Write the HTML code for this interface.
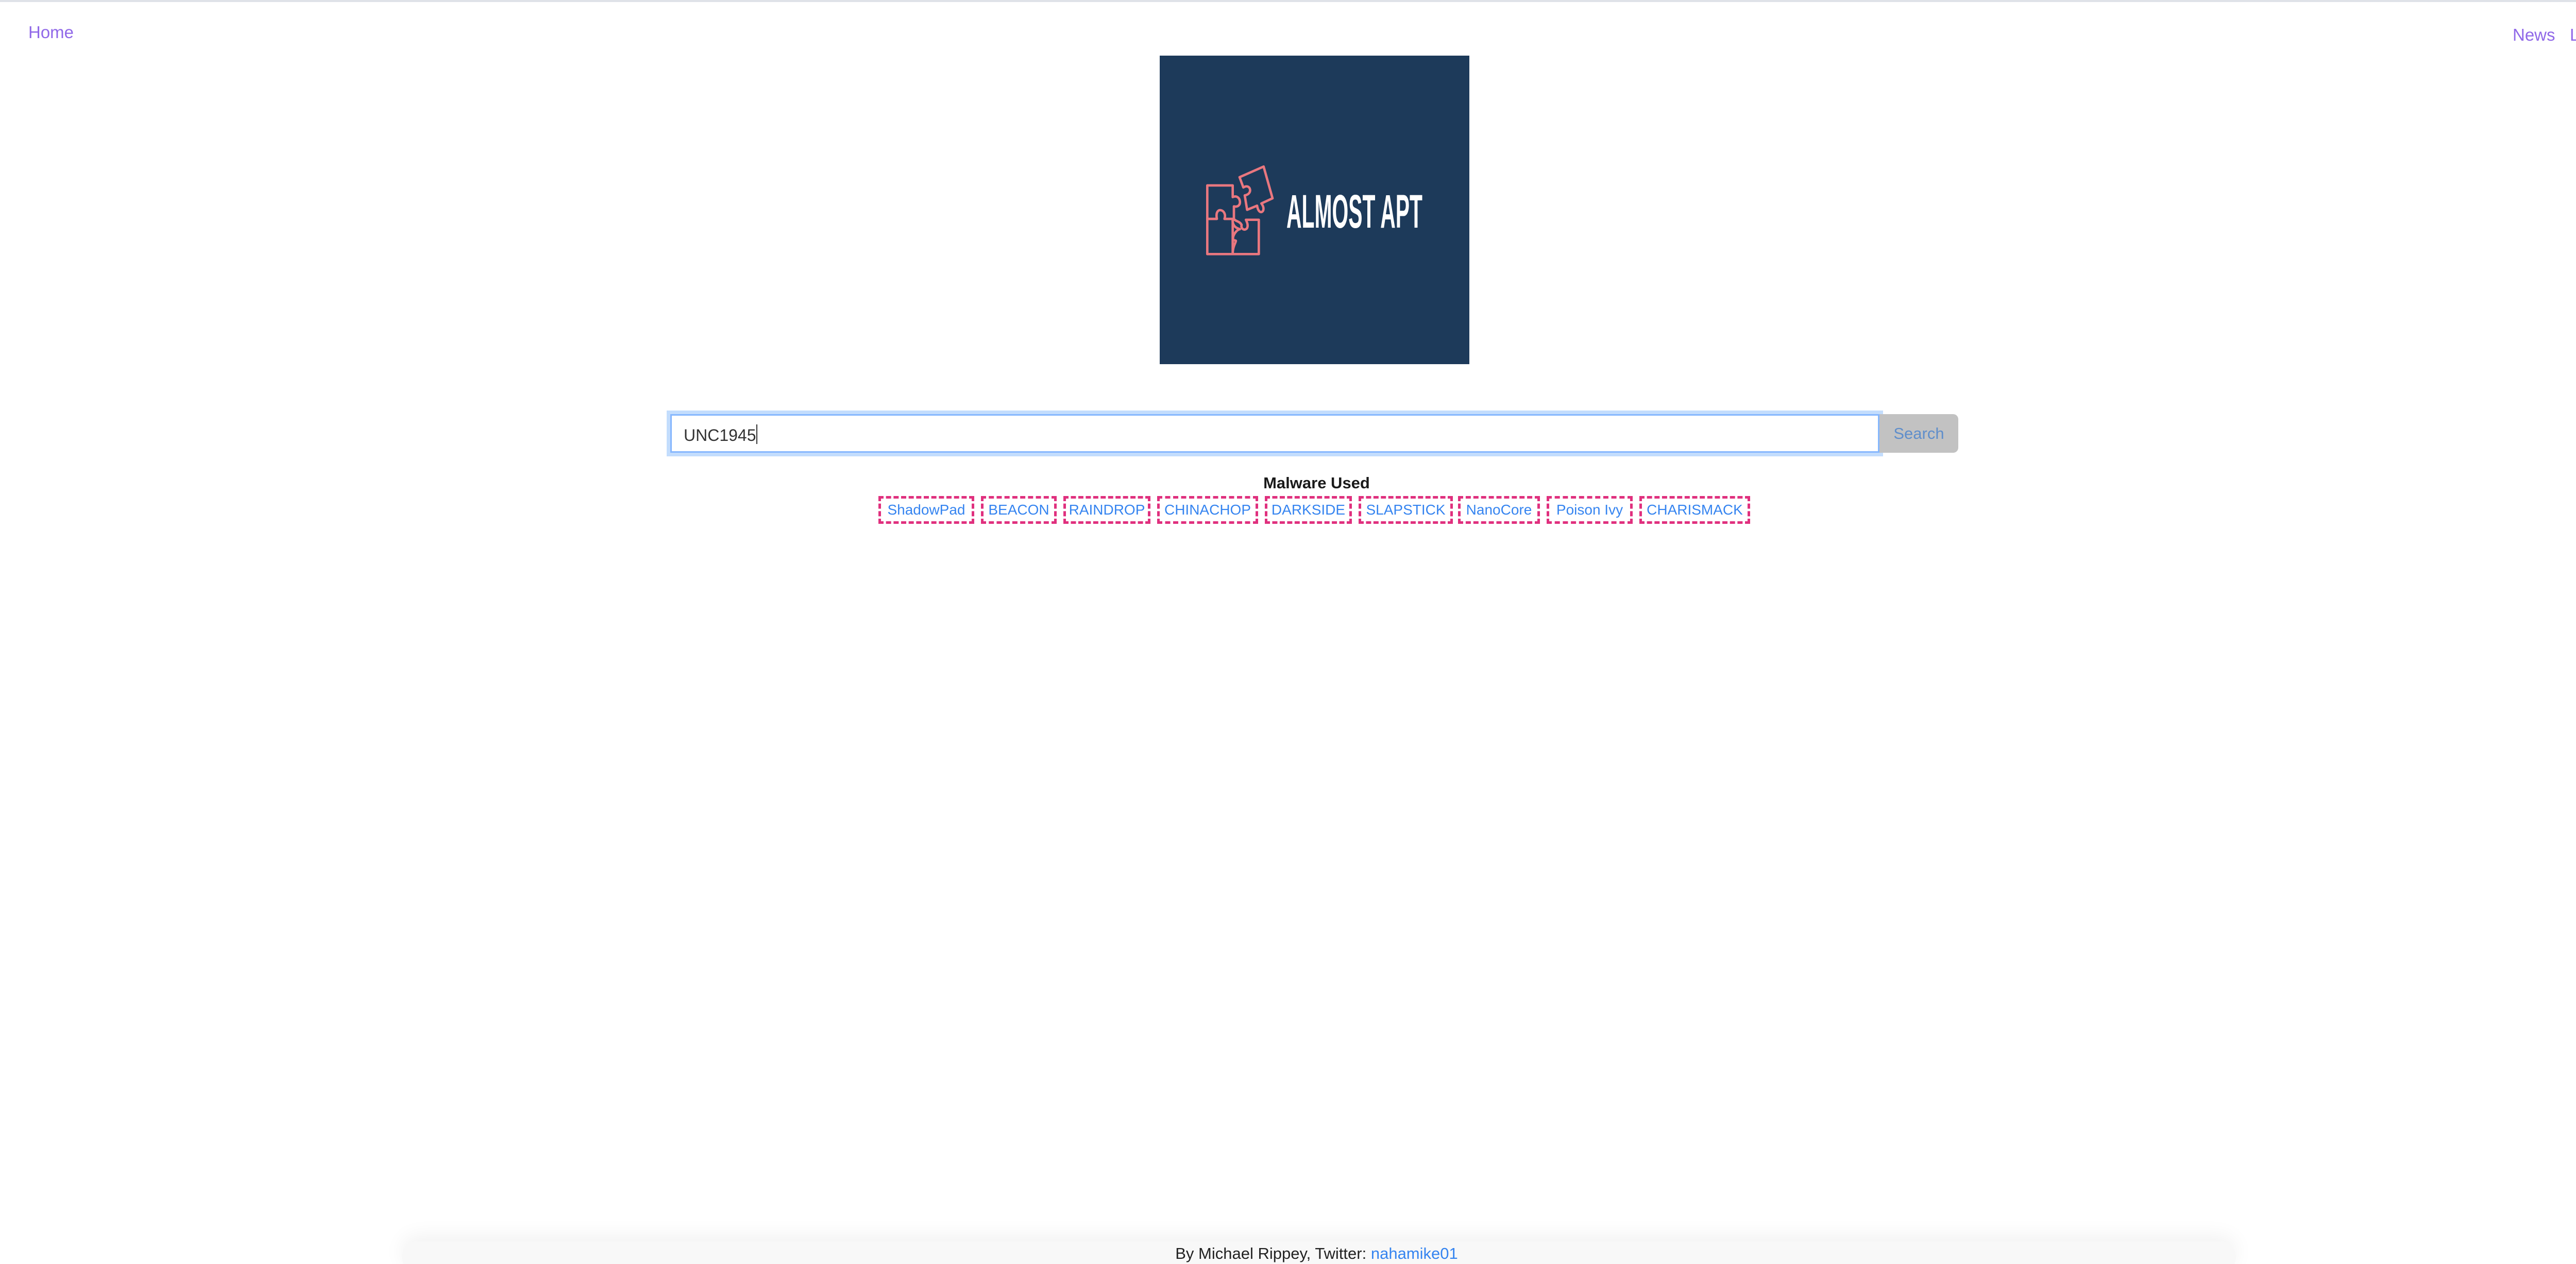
<!DOCTYPE html>
<html><head><meta charset="utf-8"><style>
html,body{margin:0;padding:0;width:5111px;height:2454px;background:#fff;overflow:hidden;position:relative;font-family:"Liberation Sans",sans-serif}
.a{position:absolute;white-space:nowrap}
.nav{color:#9068e8;font-size:33px;line-height:1}
.tag{position:absolute;top:963px;height:54px;box-sizing:border-box;border:5px dashed #e0307e;color:#3584f0;font-size:28px;text-align:center;line-height:44px}
</style></head><body>
<div class="a" style="left:0;top:0;width:5111px;height:4px;background:#dfe2e8"></div>
<div class="a nav" style="left:55px;top:46px">Home</div>
<div class="a nav" style="left:4877px;top:51px">News</div>
<div class="a nav" style="left:4988px;top:51px">Links</div>

<div class="a" style="left:2251px;top:108px;width:601px;height:599px;background:#1d3a5a"></div>
<svg class="a" style="left:2330px;top:310px" width="160" height="200" viewBox="0 0 480 600">
<g fill="none" stroke="#e9777f" stroke-width="14" stroke-linejoin="round">
<path d="M40,150 H188 V218 C235,195 250,285 195,272 V345 H140 C160,290 80,265 96,345 H40 Z"/>
<path d="M40,345 V550 H340 V350 H265 C300,420 230,420 240,380 C230,360 210,360 200,350 H188 V550"/>
<path d="M188,350 C185,390 215,400 230,405 C200,410 175,470 200,470 C220,470 188,490 188,550"/>
<path d="M228,102 L368,40 L420,225 L355,255 C390,300 340,335 330,268 L272,292 L258,208 C310,200 290,135 250,162 Z"/>
</g></svg>
<svg class="a" style="left:2490px;top:360px" width="280" height="100" viewBox="0 0 280 100">
<text x="7" y="82" font-family="Liberation Sans Narrow, Liberation Sans, sans-serif" font-size="92" font-weight="bold" fill="#fff" textLength="264" lengthAdjust="spacingAndGlyphs">ALMOST APT</text>
</svg>

<div class="a" style="left:1294px;top:797px;width:2361px;height:89px;background:#c3ddfd"></div>
<div class="a" style="left:1301px;top:804px;width:2347px;height:75px;box-sizing:border-box;border:3px solid #86b7fe;background:#fff"></div>
<div class="a" style="left:1327px;top:824px;font-size:32px;color:#333">UNC1945<span style="display:inline-block;width:2px;height:38px;background:#333;vertical-align:-6px"></span></div>
<div class="a" style="left:3648px;top:804px;width:153px;height:75px;background:#c2c2c2;border-radius:0 10px 10px 0;color:#5f8ecb;font-size:31px;line-height:75px;text-align:center">Search</div>

<div class="a" style="left:0;width:5111px;top:920px;text-align:center;font-weight:bold;font-size:31px;color:#1a1a1a">Malware Used</div>
<div class="tag" style="left:1705px;width:186px">ShadowPad</div>
<div class="tag" style="left:1904px;width:147px">BEACON</div>
<div class="tag" style="left:2064px;width:169px">RAINDROP</div>
<div class="tag" style="left:2246px;width:196px">CHINACHOP</div>
<div class="tag" style="left:2455px;width:169px">DARKSIDE</div>
<div class="tag" style="left:2637px;width:183px">SLAPSTICK</div>
<div class="tag" style="left:2830px;width:159px">NanoCore</div>
<div class="tag" style="left:3002px;width:167px">Poison Ivy</div>
<div class="tag" style="left:3182px;width:215px">CHARISMACK</div>

<div class="a" style="left:780px;top:2410px;width:3560px;height:60px;border-radius:40px;box-shadow:0 -10px 40px rgba(0,0,0,0.06);background:#f8f8f8"></div>
<div class="a" style="left:0;width:5111px;top:2416px;text-align:center;font-size:31px;color:#222">By Michael Rippey, Twitter: <span style="color:#3584f0">nahamike01</span></div>
</body></html>
